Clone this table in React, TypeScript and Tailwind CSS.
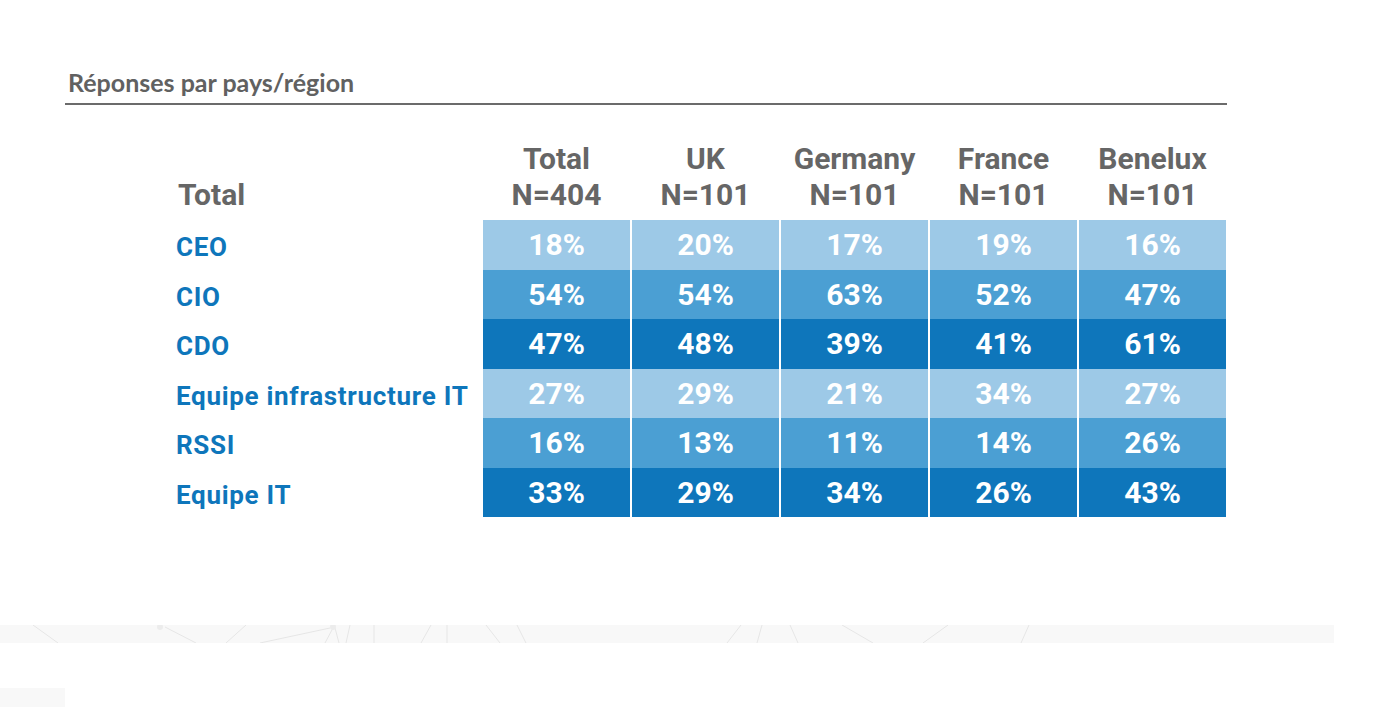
import React from "react";

// ─── Data ─────────────────────────────────────────────────────────────────────

const COLUMNS = [
    { name: "Total", n: "N=404" },
    { name: "UK", n: "N=101" },
    { name: "Germany", n: "N=101" },
    { name: "France", n: "N=101" },
    { name: "Benelux", n: "N=101" },
];

const ROWS: { label: string; values: number[]; shade: string }[] = [
    { label: "CEO", values: [18, 20, 17, 19, 16], shade: "bg-[#9dc9e7]" },
    { label: "CIO", values: [54, 54, 63, 52, 47], shade: "bg-[#4b9fd3]" },
    { label: "CDO", values: [47, 48, 39, 41, 61], shade: "bg-[#0e76bb]" },
    { label: "Equipe infrastructure IT", values: [27, 29, 21, 34, 27], shade: "bg-[#9dc9e7]" },
    { label: "RSSI", values: [16, 13, 11, 14, 26], shade: "bg-[#4b9fd3]" },
    { label: "Equipe IT", values: [33, 29, 34, 26, 43], shade: "bg-[#0e76bb]" },
];

// ─── Background strip (faint network lines) ──────────────────────────────────

function NetworkStrip() {
    return (
        <svg className="block w-full h-full" viewBox="0 0 1334 18" preserveAspectRatio="none">
            <g stroke="#e6e6e6" strokeWidth="1" fill="none">
                <line x1="33" y1="0" x2="58" y2="18" />
                <line x1="165" y1="2" x2="196" y2="18" />
                <line x1="246" y1="0" x2="226" y2="18" />
                <line x1="330" y1="3" x2="260" y2="18" />
                <line x1="333" y1="3" x2="325" y2="18" />
                <line x1="335" y1="3" x2="339" y2="18" />
                <line x1="350" y1="0" x2="346" y2="18" />
                <line x1="374" y1="0" x2="374" y2="18" />
                <line x1="431" y1="0" x2="421" y2="18" />
                <line x1="447" y1="0" x2="447" y2="18" />
                <line x1="486" y1="0" x2="500" y2="18" />
                <line x1="517" y1="0" x2="526" y2="18" />
                <line x1="741" y1="0" x2="727" y2="18" />
                <line x1="762" y1="0" x2="757" y2="18" />
                <line x1="790" y1="0" x2="798" y2="18" />
                <line x1="842" y1="0" x2="873" y2="18" />
                <line x1="948" y1="0" x2="923" y2="18" />
                <line x1="1029" y1="0" x2="1021" y2="18" />
            </g>
            <g fill="#ececec">
                <circle cx="160" cy="2" r="3" />
                <circle cx="333" cy="2" r="3" />
            </g>
        </svg>
    );
}

// ─── Component ────────────────────────────────────────────────────────────────

export default function App() {
    return (
        <div className="w-[1400px] h-[707px] bg-white flex flex-col overflow-hidden">
            {/* Title */}
            <div className="pl-[65px] pt-[66px] w-[1227px]">
                <h2 className="pl-[3px] text-[25px] leading-[32px] font-bold text-[#616161] font-['Lato',sans-serif]">
                    Réponses par pays/région
                </h2>
                <div className="mt-[5px] h-[2px] bg-[#6b6b6b]" />
            </div>

            {/* Table */}
            <div className="pl-[176px] pt-[36px]">
                <div className="grid grid-cols-[305px_repeat(5,147px)] gap-x-[2px] font-['Roboto',sans-serif]">
                    {/* Header row */}
                    <div className="flex items-end pb-[10px] pl-[2px] text-[30px] font-bold text-[#666666] leading-none">
                        Total
                    </div>
                    {COLUMNS.map((c) => (
                        <div key={c.name} className="flex flex-col items-center text-[30px] leading-[36px] font-bold text-[#666666] pb-[7px]">
                            <span>{c.name}</span>
                            <span>{c.n}</span>
                        </div>
                    ))}

                    {/* Body rows */}
                    {ROWS.map((row) => (
                        <React.Fragment key={row.label}>
                            <div className="h-[49.5px] flex items-center pt-[6px] text-[26px] font-bold text-[#0e76bb] tracking-[0.7px] whitespace-nowrap">
                                {row.label}
                            </div>
                            {row.values.map((v, i) => (
                                <div key={i} className={`h-[49.5px] flex items-center justify-center text-[30px] font-bold text-white ${row.shade}`}>
                                    {v}%
                                </div>
                            ))}
                        </React.Fragment>
                    ))}
                </div>
            </div>

            {/* Decorative footer */}
            <div className="mt-[108px] w-[1334px] h-[18px] bg-[#f8f8f8]">
                <NetworkStrip />
            </div>
            <div className="mt-[45px] w-[65px] h-[19px] bg-[#f8f8f8]" />
        </div>
    );
}
